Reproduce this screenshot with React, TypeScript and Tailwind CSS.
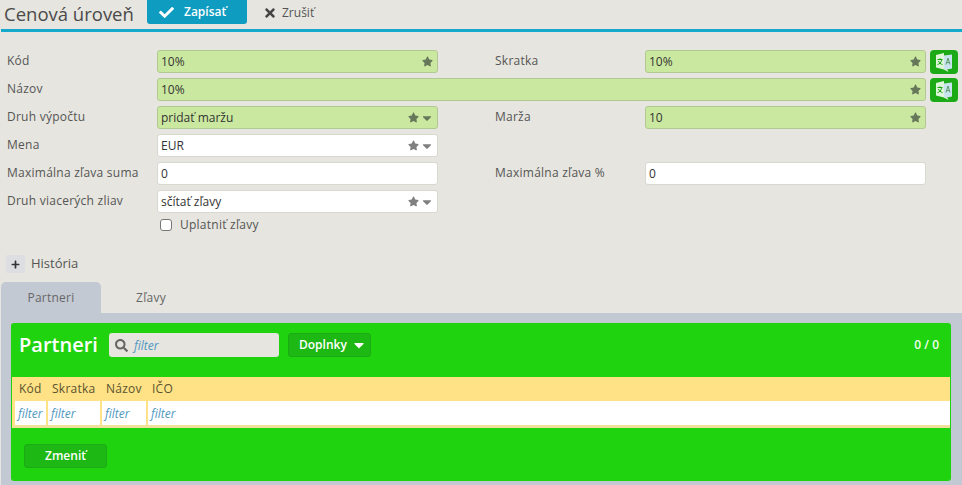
import React from "react";
import { FaCheck, FaTimes, FaSearch, FaStar, FaCaretDown, FaPlus } from "react-icons/fa";

function Translate() {
  return (
    <svg width="18" height="21" viewBox="0 0 18 21">
      <path d="M1 3 L9 1 V17.5 L1 15.5 Z" fill="#dff6da" />
      <path d="M9 3.5 L17 2.5 V16.5 L9 18 Z" fill="#c9e4ee" />
      <path d="M9 17.5 L13.5 20 L12 17" fill="#dff6da" />
      <path d="M2.5 7.5 H7.5 M5 6.3 V7.5 M6.7 7.5 C6.2 10.5 4.5 12 2.5 12.6 M3.5 9 C4.2 10.8 5.5 12 7.5 12.6" stroke="#17a512" strokeWidth="1" fill="none" />
      <path d="M11 12.5 L13 6 L15 12.5 M11.7 10.6 H14.3" stroke="#5c9a6a" strokeWidth="1" fill="none" />
    </svg>
  );
}

function Field({ value, kind = "white", select = false, star = true, className = "w-[281px]" }: { value: string; kind?: "white" | "green"; select?: boolean; star?: boolean; className?: string }) {
  const green = kind === "green";
  return (
    <div className={`flex h-[23px] items-center rounded-[3px] border pl-[3px] pr-[4px] text-[12px] text-[#333] ${green ? "border-[#b1c992] bg-[#cbe8a0]" : "border-[#d8d8d2] bg-white"} ${className}`}>
      <span className="flex-1 pt-[1px]">{value}</span>
      {star && <FaStar className={`text-[11px] ${green ? "text-[#66775a]" : "text-[#808080]"}`} />}
      {select && <FaCaretDown className={`ml-[1px] mr-[-1px] text-[14px] ${green ? "text-[#66775a]" : "text-[#808080]"}`} />}
    </div>
  );
}

function Label({ children }: { children: React.ReactNode }) {
  return <div className="w-[150px] shrink-0 pb-[1px] text-[12px] tracking-[0.25px] text-[#555]">{children}</div>;
}

function TransButton() {
  return (
    <div className="ml-[4px] flex h-[24px] w-[28px] shrink-0 items-center justify-center rounded-[4px] bg-[#1cab17]">
      <Translate />
    </div>
  );
}

function Row({ children }: { children: React.ReactNode }) {
  return <div className="flex h-[28px] items-start pl-[7px] [&>div:first-child]:pt-[2px] [&>div:nth-child(4)]:pt-[2px]">{children}</div>;
}

function Th({ children, className }: { children: string; className: string }) {
  return <div className={`shrink-0 pl-[7px] tracking-[0.25px] ${className}`}>{children}</div>;
}

function Tf({ className }: { className: string }) {
  return <div className={`flex shrink-0 items-center bg-white pl-[3px] pt-[1px] italic text-[#4f97bf] ${className}`}>filter</div>;
}

export default function App() {
  return (
    <div className="h-[485px] w-[962px] overflow-hidden bg-[#e6e5df] font-['Open_Sans',sans-serif]">
      <div className="ml-[1px] flex h-[32px] items-start border-b-[3px] border-[#16a9cc]">
        <h1 className="ml-[3px] mt-[1px] w-[143px] text-[18.5px] leading-[25px] text-[#4a4a4a]">Cenová úroveň</h1>
        <div className="flex h-[24px] w-[100px] items-center rounded-b-[3px] bg-[#0e9cc0] pl-[12px] text-[12px] font-semibold text-white">
          <FaCheck className="mr-[10px] text-[15px]" />
          <span>Zapísať</span>
        </div>
        <div className="ml-[16px] flex h-[26px] items-center text-[12px] text-[#555]">
          <FaTimes className="mr-[5px] text-[14px] text-[#444]" />
          <span>Zrušiť</span>
        </div>
      </div>

      <div className="pt-[18px]">
        <Row>
          <Label>Kód</Label>
          <Field value="10%" kind="green" />
          <div className="w-[57px]" />
          <Label>Skratka</Label>
          <Field value="10%" kind="green" />
          <TransButton />
        </Row>
        <Row>
          <Label>Názov</Label>
          <Field value="10%" kind="green" className="w-[769px]" />
          <TransButton />
        </Row>
        <Row>
          <Label>Druh výpočtu</Label>
          <Field value="pridať maržu" kind="green" select />
          <div className="w-[57px]" />
          <Label>Marža</Label>
          <Field value="10" kind="green" />
        </Row>
        <Row>
          <Label>Mena</Label>
          <Field value="EUR" select />
        </Row>
        <Row>
          <Label>Maximálna zľava suma</Label>
          <Field value="0" star={false} />
          <div className="w-[57px]" />
          <Label>Maximálna zľava %</Label>
          <Field value="0" star={false} />
        </Row>
        <Row>
          <Label>Druh viacerých zliav</Label>
          <Field value="sčítať zľavy" select />
        </Row>
        <div className="-mt-[3px] ml-[160px] flex h-[20px] items-center text-[12px] tracking-[0.25px] text-[#555]">
          <span className="h-[12px] w-[12px] rounded-[3px] border border-[#777] bg-white" />
          <span className="ml-[8px]">Uplatniť zľavy</span>
        </div>
      </div>

      <div className="ml-[6px] mt-[19px] flex h-[20px] items-center">
        <div className="flex h-[18px] w-[19px] items-center justify-center rounded-[2px] bg-[#dcdee2]">
          <FaPlus className="text-[9px] text-[#333]" />
        </div>
        <span className="ml-[6px] text-[13px] text-[#555]">História</span>
      </div>

      <div className="ml-[1px] mt-[8px] flex h-[31px] text-[12px] tracking-[0.25px] text-[#666]">
        <div className="flex w-[100px] items-center justify-center rounded-t-[5px] bg-[#c3c9d3]">Partneri</div>
        <div className="flex w-[100px] items-center justify-center">Zľavy</div>
      </div>

      <div className="ml-[1px] h-[172px] bg-[#c3c9d3] pl-[10px] pt-[10px]">
        <div className="h-[158px] w-[940px] rounded-[3px] bg-[#20d30f]">
          <div className="flex h-[54px] items-start pl-[8px] pr-[12px] pt-[10px]">
            <div className="w-[90px] text-[20px] font-semibold leading-[24px] text-white">Partneri</div>
            <div className="flex h-[24px] w-[170px] items-center rounded-[3px] bg-[#e6e5df] pl-[6px] pt-[1px] text-[12px] italic text-[#4f97bf]">
              <FaSearch className="mr-[6px] text-[13px] text-[#666]" />
              <span>filter</span>
            </div>
            <div className="ml-[9px] flex h-[24px] w-[83px] items-center rounded-[3px] border border-[#1cab17] bg-[#1eb814] pl-[10px] text-[12px] font-semibold text-white">
              <span>Doplnky</span>
              <FaCaretDown className="ml-[4px] text-[16px]" />
            </div>
            <div className="flex-1 pt-[3px] text-right text-[12px] font-semibold text-[#f2fff0]">0 / 0</div>
          </div>

          <div className="ml-[1px] w-[938px] border-b-[3px] border-[#f3df9c] bg-[#ffe285] text-[12px]">
            <div className="flex h-[24px] items-center text-[#5a5230]">
              <Th className="w-[33px]">Kód</Th>
              <Th className="w-[54px]">Skratka</Th>
              <Th className="w-[46px]">Názov</Th>
              <Th className="flex-1">IČO</Th>
            </div>
            <div className="flex h-[24px] gap-[2px] pl-[3px]">
              <Tf className="w-[31px]" />
              <Tf className="w-[52px]" />
              <Tf className="w-[44px]" />
              <Tf className="flex-1" />
            </div>
          </div>

          <div className="ml-[13px] mt-[16px] flex h-[24px] w-[83px] items-center justify-center rounded-[3px] border border-[#1cab17] bg-[#1eb814] text-[12px] font-semibold text-white">
            Zmeniť
          </div>
        </div>
      </div>
    </div>
  );
}
